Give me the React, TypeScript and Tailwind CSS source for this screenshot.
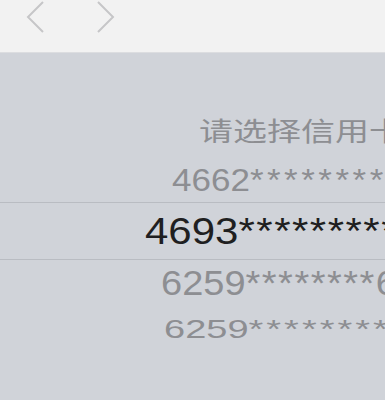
import React from 'react';

type Row = {
  id: string;
  head: string;
  tail: string;
  h: string;
  pl: string;
  size: string;
  scale: string;
  color: string;
  track: string;
};

const above: Row[] = [
  { id: 'a', head: '4662', tail: '**********', h: 'h-[46px]', pl: 'pl-[172px]', size: 'text-[35px]', scale: 'scale-y-[0.9]', color: 'text-[#8d8e92]', track: 'tracking-[3.5px]' },
];

const below: Row[] = [
  { id: 'c', head: '6259', tail: '********6', h: 'h-[46px]', pl: 'pl-[161px]', size: 'text-[38px]', scale: 'scale-y-[0.92]', color: 'text-[#8d8e92]', track: 'tracking-[1.5px]' },
  { id: 'd', head: '6259', tail: '**********', h: 'h-[46px]', pl: 'pl-[164px]', size: 'text-[38px]', scale: 'scale-y-[0.7]', color: 'text-[#8d8e92]', track: 'tracking-[3px]' },
];

const font = { fontFamily: '"Liberation Sans", "Noto Sans CJK SC", sans-serif' };

const WheelRow: React.FC<{ row: Row }> = ({ row }) => (
  <div className={`${row.h} flex items-center whitespace-nowrap overflow-hidden ${row.pl}`}>
    <span className={`${row.size} ${row.scale} ${row.color} leading-none`}>
      {row.head}
      <span className={row.track}>{row.tail}</span>
    </span>
  </div>
);

const App: React.FC = () => {
  return (
    <div className="w-[385px] h-[400px] overflow-hidden bg-[#d0d3d9]" style={font}>
      {/* Toolbar */}
      <div className="h-[53px] bg-[#f2f2f2] border-b border-[#dcdde0] flex items-start">
        <svg width="130" height="40" viewBox="0 0 130 40">
          <polyline points="43,2 28,17 43,32" fill="none" stroke="#c6c6c8" strokeWidth="2" />
          <polyline points="98,2 113,17 98,32" fill="none" stroke="#c6c6c8" strokeWidth="2" />
        </svg>
      </div>

      {/* Picker wheel */}
      <div className="h-[55px]" />
      <div className="h-[48px] flex items-center whitespace-nowrap overflow-hidden pl-[199px]">
        <span className="text-[34px] scale-y-[0.77] text-[#8d8e92] leading-none">请选择信用卡</span>
      </div>
      {above.map(r => (
        <WheelRow key={r.id} row={r} />
      ))}

      <div className="h-[58px] border-y border-[#b9bcc2] flex items-center whitespace-nowrap overflow-hidden pl-[145px]">
        <span className="text-[42px] scale-y-[0.9] text-[#1f1f21] leading-none">
          4693<span className="tracking-[1.5px]">**********</span>
        </span>
      </div>

      {below.map(r => (
        <WheelRow key={r.id} row={r} />
      ))}
    </div>
  );
};

export default App;
